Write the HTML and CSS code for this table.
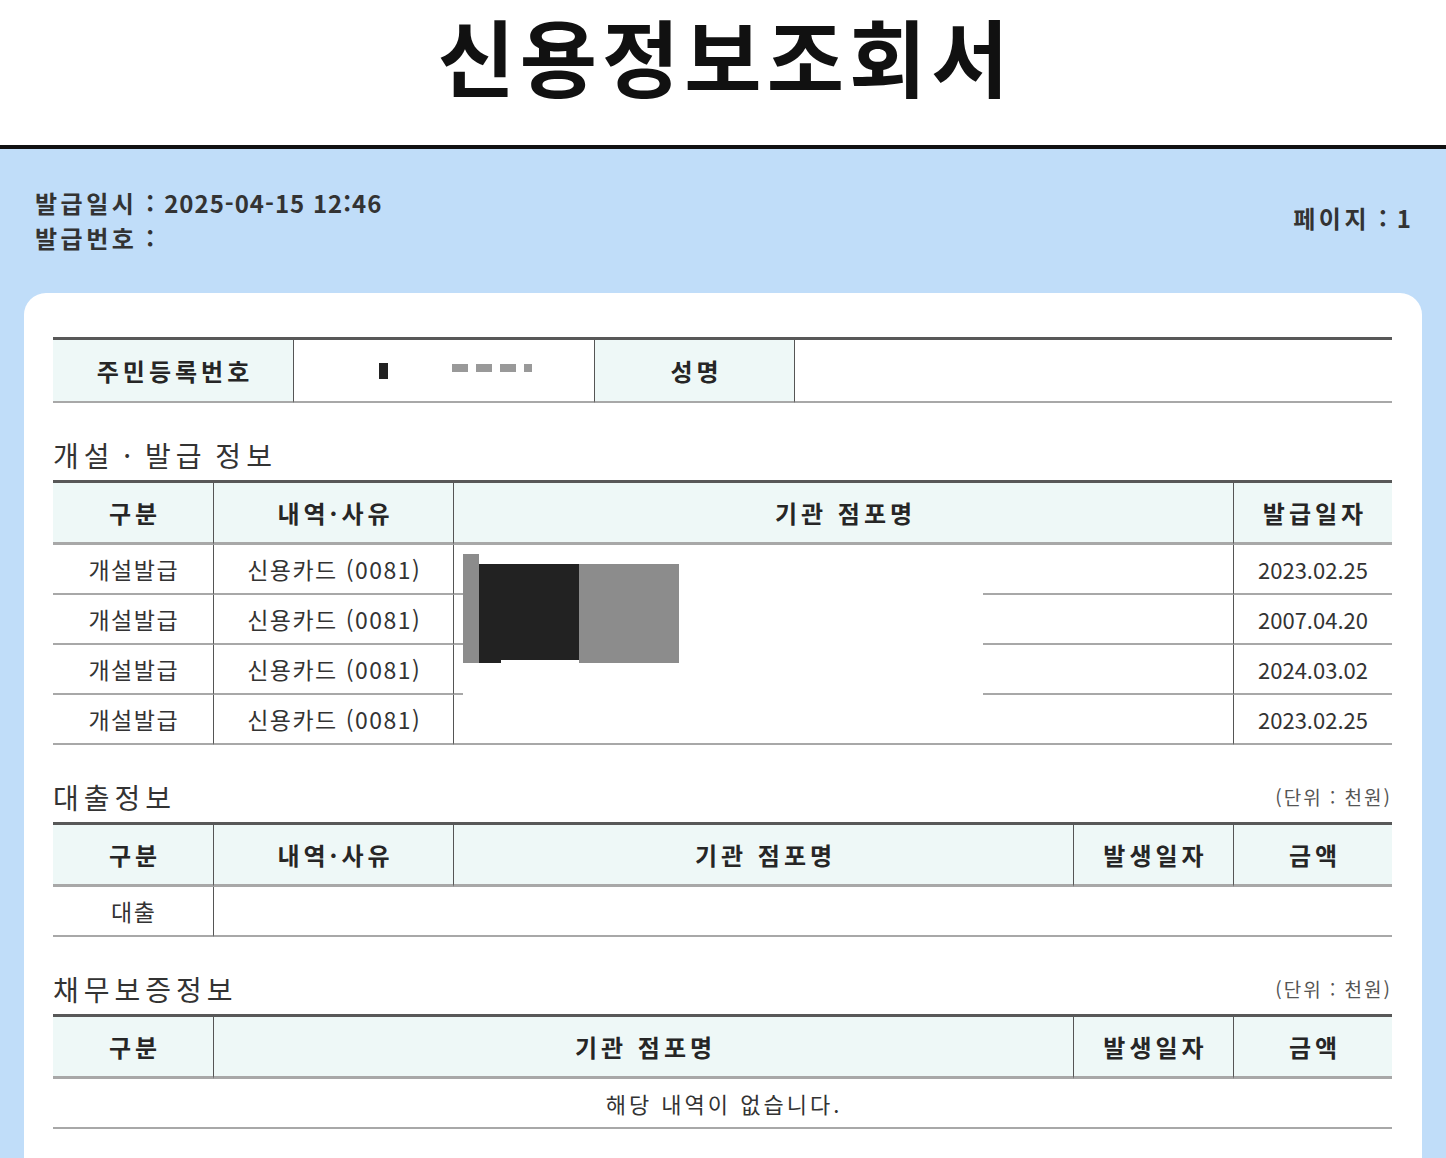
FILE: index.html
```html
<!DOCTYPE html>
<html lang="ko">
<head>
<meta charset="utf-8">
<title>신용정보조회서</title>
<link rel="stylesheet" href="styles.css">
</head>
<body>
<header class="title-bar">
  <h1 class="doc-title">신용정보조회서</h1>
</header>
<main class="sheet">
  <div class="meta">
    <div class="meta-left">
      <p class="meta-line"><span class="meta-label">발급일시</span><span class="meta-colon">:</span><span class="meta-value">2025-04-15 12:46</span></p>
      <p class="meta-line"><span class="meta-label">발급번호</span><span class="meta-colon">:</span></p>
    </div>
    <p class="meta-line meta-right"><span class="meta-label">페이지</span><span class="meta-colon">:</span><span class="meta-value">1</span></p>
  </div>

  <section class="card">
    <table class="grid-table id-table">
      <colgroup>
        <col class="w240"><col class="w301"><col class="w200"><col>
      </colgroup>
      <tr>
        <th>주민등록번호</th>
        <td class="masked">
          <div class="mask-row">
            <span class="mask-dark"></span>
            <span class="mask-dashes"><span class="dash"></span><span class="dash"></span><span class="dash"></span><span class="dash short"></span></span>
          </div>
        </td>
        <th>성명</th>
        <td></td>
      </tr>
    </table>

    <div class="sec-head">
      <h2 class="sec-title">개설 · 발급 정보</h2>
    </div>
    <div class="table-wrap">
      <table class="grid-table">
        <colgroup>
          <col class="w160"><col class="w240"><col class="w780"><col>
        </colgroup>
        <tr><th>구분</th><th>내역·사유</th><th>기관 점포명</th><th>발급일자</th></tr>
        <tr><td>개설발급</td><td>신용카드 (0081)</td><td></td><td class="date">2023.02.25</td></tr>
        <tr><td>개설발급</td><td>신용카드 (0081)</td><td></td><td class="date">2007.04.20</td></tr>
        <tr><td>개설발급</td><td>신용카드 (0081)</td><td></td><td class="date">2024.03.02</td></tr>
        <tr><td>개설발급</td><td>신용카드 (0081)</td><td></td><td class="date">2023.02.25</td></tr>
      </table>
      <div class="redact">
        <span class="r-bar"></span>
        <span class="r-black"></span>
        <span class="r-notch"></span>
        <span class="r-gray"></span>
      </div>
    </div>

    <div class="sec-head">
      <h2 class="sec-title">대출정보</h2>
      <span class="unit">(단위 : 천원)</span>
    </div>
    <table class="grid-table">
      <colgroup>
        <col class="w160"><col class="w240"><col class="w620"><col class="w160"><col>
      </colgroup>
      <tr><th>구분</th><th>내역·사유</th><th>기관 점포명</th><th>발생일자</th><th>금액</th></tr>
      <tr><td>대출</td><td colspan="4"></td></tr>
    </table>

    <div class="sec-head">
      <h2 class="sec-title">채무보증정보</h2>
      <span class="unit">(단위 : 천원)</span>
    </div>
    <table class="grid-table">
      <colgroup>
        <col class="w160"><col class="w860"><col class="w160"><col>
      </colgroup>
      <tr><th>구분</th><th>기관 점포명</th><th>발생일자</th><th>금액</th></tr>
      <tr><td colspan="4" class="empty">해당 내역이 없습니다.</td></tr>
    </table>
  </section>
</main>
</body>
</html>
```

FILE: styles.css
```css
* { box-sizing: border-box; }

html, body {
  margin: 0;
  padding: 0;
}

body {
  font-family: "Noto Sans CJK KR", "Noto Sans", sans-serif;
  color: #333;
  background: #c0ddf9;
  overflow: hidden;
}

.title-bar {
  background: #fff;
  height: 149px;
  border-bottom: 4px solid #111;
  display: flex;
  align-items: center;
  justify-content: center;
  padding-bottom: 36px;
}

.doc-title {
  margin: 0;
  text-align: center;
  font-size: 84px;
  line-height: normal;
  font-weight: 700;
  color: #111;
  letter-spacing: 5px;
  padding-left: 5px;
  white-space: nowrap;
}

.sheet {
  background: #c0ddf9;
}

.meta {
  display: flex;
  justify-content: space-between;
  align-items: center;
  padding: 36px 34px 38px 35px;
}

.meta-line {
  margin: 0;
  font-size: 24px;
  line-height: 35px;
  font-weight: 700;
  color: #333;
  white-space: nowrap;
}

.meta-label {
  letter-spacing: 3.5px;
}

.meta-colon {
  display: inline-block;
  margin: 0 10px 0 9px;
}

.meta-value {
  letter-spacing: 1px;
}

.meta-right {
  margin-bottom: 6px;
}

.card {
  background: #fff;
  margin: 0 24px;
  border-radius: 22px 22px 0 0;
  padding: 44px 30px 40px 29px;
}

.grid-table {
  width: 100%;
  table-layout: fixed;
  border-collapse: separate;
  border-spacing: 0;
  border-top: 3px solid #585858;
}

.w160 { width: 160px; }
.w200 { width: 200px; }
.w240 { width: 240px; }
.w301 { width: 301px; }
.w620 { width: 620px; }
.w780 { width: 780px; }
.w860 { width: 860px; }

.grid-table th {
  background: #eef8f7;
  height: 62px;
  padding: 0;
  font-size: 24px;
  font-weight: 700;
  color: #262626;
  letter-spacing: 4px;
  text-indent: 4px;
  text-align: center;
  border-bottom: 3px solid #a8a8a8;
}

.grid-table td {
  height: 50px;
  padding: 0;
  font-size: 23px;
  font-weight: 400;
  color: #333;
  letter-spacing: 1.5px;
  text-indent: 1.5px;
  text-align: center;
  border-bottom: 2px solid #a8a8a8;
}

.grid-table td.date {
  font-size: 22px;
  letter-spacing: 0;
  text-indent: 0;
}

.grid-table td.empty {
  font-size: 22px;
  letter-spacing: 3px;
  text-indent: 3px;
}

.grid-table th + th,
.grid-table td + td,
.grid-table th + td,
.grid-table td + th {
  border-left: 1px solid #555;
}

.id-table th,
.id-table td {
  height: 63px;
  border-bottom: 2px solid #a8a8a8;
}

.id-table td {
  background: #fff;
}

.mask-row {
  display: flex;
  align-items: center;
}

.mask-dark {
  display: block;
  width: 9px;
  height: 16px;
  background: #222;
  margin-left: 85px;
}

.mask-dashes {
  display: flex;
  gap: 8px;
  margin-left: 64px;
  margin-bottom: 6px;
}

.dash {
  display: block;
  width: 16px;
  height: 8px;
  background: #999;
}

.dash.short {
  width: 8px;
}

.sec-head {
  display: flex;
  justify-content: space-between;
  align-items: center;
  height: 40px;
  margin-top: 32px;
  margin-bottom: 5px;
}

.sec-title {
  margin: 0;
  font-size: 28px;
  line-height: 40px;
  font-weight: 400;
  color: #333;
  letter-spacing: 5px;
  word-spacing: -4px;
}

.unit {
  font-size: 19px;
  line-height: 40px;
  color: #555;
  letter-spacing: 2px;
}

.table-wrap {
  position: relative;
}

.redact {
  position: absolute;
  left: 410px;
  top: 66px;
  width: 520px;
  height: 150px;
  background: #fff;
}

.redact span {
  position: absolute;
  display: block;
}

.r-bar {
  left: 0;
  top: 8px;
  width: 16px;
  height: 109px;
  background: #8c8c8c;
}

.r-black {
  left: 16px;
  top: 18px;
  width: 100px;
  height: 96px;
  background: #222;
}

.r-notch {
  left: 16px;
  top: 110px;
  width: 22px;
  height: 7px;
  background: #222;
}

.r-gray {
  left: 116px;
  top: 18px;
  width: 100px;
  height: 99px;
  background: #8c8c8c;
}
```
